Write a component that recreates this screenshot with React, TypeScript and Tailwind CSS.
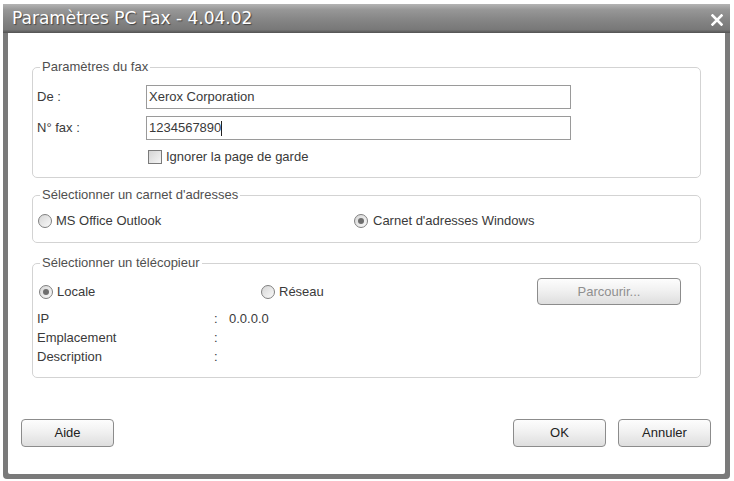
import type { ReactNode } from "react";

const FONT = "font-['Liberation_Sans',Arial,sans-serif]";

function Radio({ checked }: { checked?: boolean }) {
  return (
    <span className="w-[14px] h-[14px] rounded-full border border-[#808080] bg-[linear-gradient(135deg,#d6d6d6,#fafafa)] flex items-center justify-center shrink-0">
      {checked && <span className="w-[6px] h-[6px] rounded-full bg-[#6e6e6e]" />}
    </span>
  );
}

function Btn({ children, disabled, w }: { children: ReactNode; disabled?: boolean; w: string }) {
  return (
    <div
      className={`${w} h-[28px] rounded-[4px] border border-[#8c8c8c] bg-[linear-gradient(#fdfdfd,#f1f1f1_45%,#dedede)] flex items-center justify-center text-[13px] ${
        disabled ? "text-[#8f8f8f]" : "text-[#222]"
      }`}
    >
      {children}
    </div>
  );
}

function Groupe({ titre, className, children }: { titre: string; className: string; children: ReactNode }) {
  return (
    <fieldset className={`mx-[24px] px-[3px] border border-[#d3d3d3] rounded-[5px] ${className}`}>
      <legend className="ml-[4px] px-[2px] text-[13px] leading-[16px] text-[#4f4f4f]">{titre}</legend>
      {children}
    </fieldset>
  );
}

export default function App() {
  return (
    <div className={`w-[734px] h-[481px] bg-white pt-[4px] pl-[3px] ${FONT}`}>
      <div className="w-[727px] h-[475px] flex flex-col bg-[#7a7a7a] rounded-b-[4px] overflow-hidden">
        {/* Barre de titre */}
        <div className="h-[29px] shrink-0 flex items-center justify-between pl-[9px] pr-[7px] bg-[linear-gradient(#b4b4b4,#979797_20%,#858585_55%,#787878_88%,#525252_100%)]">
          <span className="font-['DejaVu_Sans',sans-serif] text-[17px] leading-none text-white [text-shadow:1px_1px_1px_#444]">
            Paramètres PC Fax - 4.04.02
          </span>
          <svg width="12" height="12" viewBox="0 0 12 12" className="mt-[2px]">
            <path d="M1.5 1.5 L10.5 10.5 M10.5 1.5 L1.5 10.5" stroke="white" strokeWidth="2.6" strokeLinecap="square" />
          </svg>
        </div>

        {/* Corps */}
        <div className="flex-1 mx-[5px] mb-[5px] bg-white rounded-b-[2px] flex flex-col text-[13px] text-[#3a3a3a]">
          <Groupe titre="Paramètres du fax" className="mt-[26px] pt-[10px] pb-[10px]">
            <div className="flex items-center h-[24px]">
              <span className="w-[110px] pl-[1px]">De :</span>
              <div className="w-[425px] h-[24px] border border-[#9a9a9a] flex items-center pl-[2px]">Xerox Corporation</div>
            </div>
            <div className="flex items-center h-[24px] mt-[7px]">
              <span className="w-[110px] pl-[1px]">N° fax :</span>
              <div className="w-[425px] h-[24px] border border-[#9a9a9a] flex items-center pl-[2px]">
                1234567890
                <span className="w-px h-[15px] bg-[#222]" />
              </div>
            </div>
            <div className="flex items-center h-[20px] mt-[7px] pl-[112px] gap-[4px]">
              <span className="w-[14px] h-[14px] border border-[#7a7a7a] bg-[linear-gradient(135deg,#d4d4d4,#f5f5f5)]" />
              <span>Ignorer la page de garde</span>
            </div>
          </Groupe>

          <Groupe titre="Sélectionner un carnet d'adresses" className="mt-[9px] pt-[8px] pb-[11px]">
            <div className="flex items-center h-[20px]">
              <div className="w-[318px] pl-[2px] flex items-center gap-[4px]">
                <Radio />
                <span>MS Office Outlook</span>
              </div>
              <div className="flex items-center gap-[5px]">
                <Radio checked />
                <span>Carnet d'adresses Windows</span>
              </div>
            </div>
          </Groupe>

          <Groupe titre="Sélectionner un télécopieur" className="mt-[12px] pt-[7px] pb-[11px]">
            <div className="flex items-center h-[27px]">
              <div className="w-[225px] pl-[3px] flex items-center gap-[4px]">
                <Radio checked />
                <span>Locale</span>
              </div>
              <div className="w-[276px] flex items-center gap-[4px]">
                <Radio />
                <span>Réseau</span>
              </div>
              <div className="w-[144px] h-[27px] rounded-[4px] border border-[#8c8c8c] bg-[linear-gradient(#fdfdfd,#f1f1f1_45%,#dedede)] flex items-center justify-center text-[#8f8f8f]">
                Parcourir...
              </div>
            </div>
            <div className="mt-[4px]">
              {[
                ["IP", "0.0.0.0"],
                ["Emplacement", ""],
                ["Description", ""],
              ].map(([cle, val]) => (
                <div key={cle} className="flex items-center h-[19px]">
                  <span className="w-[178px] pl-[1px]">{cle}</span>
                  <span className="w-[15px]">:</span>
                  <span>{val}</span>
                </div>
              ))}
            </div>
          </Groupe>

          <div className="mt-[41px] flex items-center pl-[13px] pr-[14px]">
            <Btn w="w-[93px]">Aide</Btn>
            <div className="flex-1" />
            <Btn w="w-[93px]">OK</Btn>
            <div className="w-[12px]" />
            <Btn w="w-[93px]">Annuler</Btn>
          </div>
        </div>
      </div>
    </div>
  );
}
